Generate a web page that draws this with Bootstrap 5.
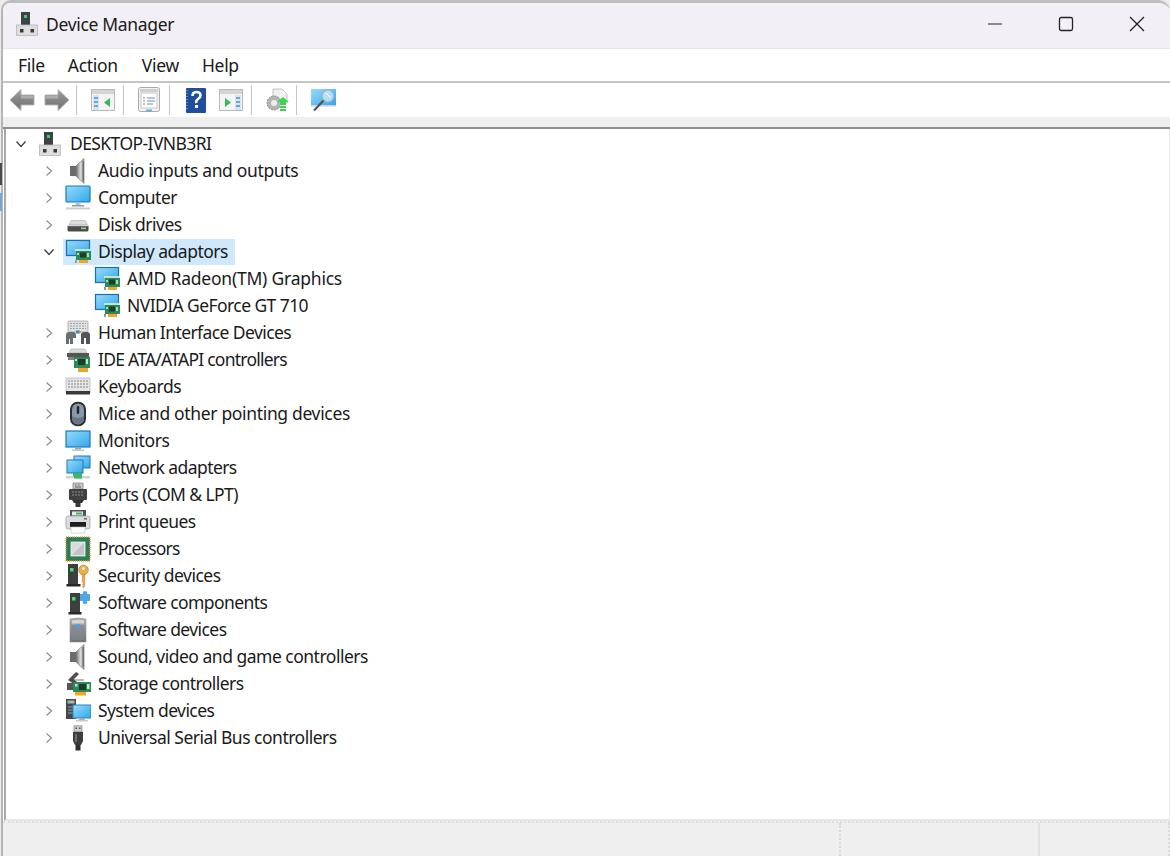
<!DOCTYPE html>
<html lang="en">
<head>
<meta charset="utf-8">
<title>Device Manager</title>
<link href="https://cdn.jsdelivr.net/npm/bootstrap@5.3.0/dist/css/bootstrap.min.css" rel="stylesheet">
<style>
html,body{height:100%;margin:0;overflow:hidden;background:#ececec}
body{font-family:"Noto Sans","Open Sans",sans-serif;color:#1a1a1a}
.win{height:856px;background:#fff;border-top:3px solid #bdbdbd;border-left:2px solid #b5b5b5;border-top-left-radius:10px;border-top-right-radius:12px;overflow:hidden;margin-left:1px;width:1169px}
.tbar{height:46px;background:#f2f0f6;border-bottom:1px dotted #dcdcdc;padding-left:12px;padding-bottom:3px;font-size:17.5px}
.tbar .ttl{margin-left:5px;letter-spacing:-.32px}
.wctl{margin-right:-2px}
.wbtn{width:71px;height:40px}
.menub{height:32px;font-size:17.5px;border-bottom:2px solid #c4c4c4;padding-left:15px;box-sizing:content-box;letter-spacing:-.3px}
.m1{margin-left:23px}.m2{margin-left:24px}.m3{margin-left:23px}
.tools{height:34px;padding-left:6px}
.tsep{width:1px;height:30px;background:#c6c6c6}
.ml9{margin-left:9px}.ml6{margin-left:6px}.ml13{margin-left:13px}.ml12{margin-left:12px}.ml8{margin-left:8px}.ml16{margin-left:16px}.ml14{margin-left:14px}
.strip{height:10px;background:#efefef;border-bottom:2px solid #8d8d8d;box-sizing:content-box}
.treebox{height:692px;border-left:2px solid #a9a9a9;margin-left:1px;padding-top:1px;font-size:17.5px;border-right:1px solid #e8e8e8;border-bottom:2px solid #e8e8e8}
.node{height:27px;letter-spacing:-.34px;white-space:nowrap}
.mid{letter-spacing:-.5px}
.nar{letter-spacing:-.58px}
.xnar{letter-spacing:-.76px}
.wid{letter-spacing:-.22px}
.chev{width:14px;height:14px;flex:none}
.ico{width:26px;height:26px;flex:none;display:block}
.lv0{padding-left:8px}.lv1{padding-left:36px}.lv2{padding-left:88px}
.lv0 .ico{margin-left:9px}.lv1 .ico{margin-left:9px}
.lab{margin-left:7px}
.sel{background:#cfe8fb;padding-right:7px;height:26px;margin-left:7px;padding-left:2px}
.lv1.opn .ico{margin-left:0}
.stat{height:35px;background:#efefef;border-top:2px dotted #dedede;border-left:0}
.sc1{width:836px}.sc2{width:199px;border-left:2px dotted #d8d8d8}.sc3{flex:1;border-left:2px solid #e2e2e2;border-right:2px dotted #d8d8d8}
.peek{left:0;width:2px}
.peek1{top:163px;height:22px;background:#4a4a4a}
.peek2{top:193px;height:18px;background:#6fa8d6}
</style>
</head>
<body>
<div class="peek peek1 position-absolute"></div>
<div class="peek peek2 position-absolute"></div>
<svg width="0" height="0" class="position-absolute">
<defs>
<linearGradient id="scr" x1="0" y1="0" x2="1" y2="1"><stop offset="0" stop-color="#9adcfb"/><stop offset="1" stop-color="#2fa6ea"/></linearGradient>
<linearGradient id="gry" x1="0" y1="0" x2="0" y2="1"><stop offset="0" stop-color="#b4b4b4"/><stop offset="1" stop-color="#6e6e6e"/></linearGradient>
<linearGradient id="spk" x1="0" y1="0" x2="1" y2="0"><stop offset="0" stop-color="#6a6a6a"/><stop offset=".55" stop-color="#dcdcdc"/><stop offset="1" stop-color="#9a9a9a"/></linearGradient>
<linearGradient id="arw" x1="0" y1="0" x2="0" y2="1"><stop offset="0" stop-color="#9b9b9b"/><stop offset="1" stop-color="#6f6f6f"/></linearGradient>

<symbol id="i-card" viewBox="0 0 26 26">
<rect x="1.500" y="1.500" width="23" height="15" fill="url(#scr)" stroke="#1d6fb0" stroke-width="1.200"/>
<rect x="11" y="12" width="15" height="9" fill="#2c8a57"/>
<rect x="10" y="10" width="15" height="2" fill="#bfe6d0"/>
<rect x="15" y="13.500" width="6" height="5" fill="#203a2c"/>
<rect x="12" y="14" width="2" height="2" fill="#a9d8bf"/><rect x="22" y="14" width="2" height="4" fill="#a9d8bf"/>
<rect x="14" y="21" width="9" height="3" fill="#f0a526"/>
<rect x="10" y="21" width="2" height="3" fill="#9a9a9a"/>
</symbol>

<symbol id="i-pc" viewBox="0 0 26 26">
<rect x="1" y="1" width="24" height="16" rx="1" fill="url(#scr)" stroke="#1979bb" stroke-width="1.200"/>
<rect x="10.500" y="17.500" width="5" height="2.500" fill="#b8c4cc"/>
<rect x="7" y="20" width="12" height="1.500" fill="#8f9aa2"/>
<rect x="1" y="22.500" width="24" height="2" fill="#c9d0d4"/>
</symbol>

<symbol id="i-mon" viewBox="0 0 26 26">
<rect x="1" y="3" width="24" height="16" fill="url(#scr)" stroke="#1979bb" stroke-width="1.200"/>
<rect x="10" y="19.500" width="6" height="2" fill="#9aa6ae"/>
<rect x="7" y="21.500" width="12" height="1.500" fill="#bcc4c9"/>
</symbol>

<symbol id="i-spk" viewBox="0 0 26 26">
<path d="M5 8h6v10H5z" fill="#6b6b6b"/>
<path d="M11 8 19 .5v25L11 18z" fill="url(#spk)" stroke="#7a7a7a" stroke-width=".7"/>
<path d="M17.500 3h1.500v20h-1.500z" fill="#6f6f6f"/>
</symbol>

<symbol id="i-disk" viewBox="0 0 26 26">
<path d="M4 12.500 6 8.500h14l2.500 4z" fill="#dcdcdc" stroke="#ababab" stroke-width=".6"/>
<rect x="2.500" y="13" width="21" height="6.500" rx="1.500" fill="#4c4c4c"/>
<rect x="2.500" y="13" width="21" height="1.200" fill="#d5d5d5"/>
<rect x="16" y="15.500" width="5" height="1.600" fill="#8bd89d"/>
</symbol>

<symbol id="i-hid" viewBox="0 0 26 26">
<rect x="3" y="1" width="20" height="11" rx="1" fill="#dfe1e3" stroke="#9b9b9b" stroke-width=".7"/>
<path d="M5 3.500h16M5 6h16M5 8.500h16" stroke="#9da3a8" stroke-dasharray="2 1"/>
<rect x="11" y="10.500" width="4" height="3" fill="#3b88d1"/><rect x="14" y="11" width="2" height="2" fill="#e09a25"/>
<path d="M1 24V15q0-3 3-3h4q3 0 3 3v3H8v6H5v-5H4v5z" fill="#6a6f74"/>
<path d="M25 24V15q0-3-3-3h-3q-3 0-3 3v9h3v-6h2v6z" fill="#50555a"/>
</symbol>

<symbol id="i-ide" viewBox="0 0 26 26">
<path d="M4 6 6 2h14l2 4z" fill="#d9d9d9" stroke="#a8a8a8" stroke-width=".6"/>
<rect x="2" y="6" width="22" height="4" fill="#555"/>
<rect x="3" y="10" width="7" height="3" fill="#858585"/>
<rect x="9" y="10" width="16" height="11" fill="#2c8a57"/>
<rect x="13" y="12" width="7" height="6" fill="#203a2c"/>
<rect x="10" y="12" width="2" height="2" fill="#bfe6d0"/><rect x="21" y="12" width="2" height="5" fill="#bfe6d0"/>
<rect x="13" y="21" width="10" height="4" fill="#f0a526"/>
</symbol>

<symbol id="i-kbd" viewBox="0 0 26 26">
<rect x="1" y="4" width="24" height="15" fill="#e4e6e8" stroke="#a8acaf" stroke-width=".7"/>
<path d="M3 7h20M3 10h20M3 13h20" stroke="#a1a7ac" stroke-width="1.500" stroke-dasharray="2 1"/>
<rect x="1" y="17" width="24" height="3.500" fill="#3b3b3b"/>
</symbol>

<symbol id="i-mouse" viewBox="0 0 26 26">
<rect x="5" y="0.800" width="16" height="24.400" rx="7.500" fill="#2c2f32"/>
<rect x="7" y="2.500" width="12" height="21" rx="6" fill="#8898ac"/>
<rect x="11.800" y="5" width="2.400" height="8" rx="1.200" fill="#22262a"/>
<path d="M7 15q6 4 12 0v3q-1 5-6 5t-6-5z" fill="#6a7686"/>
</symbol>

<symbol id="i-net" viewBox="0 0 26 26">
<rect x="9" y="1" width="16" height="12" fill="url(#scr)" stroke="#1979bb"/>
<rect x="2" y="5" width="16" height="13" fill="url(#scr)" stroke="#1979bb"/>
<rect x="8" y="18" width="9" height="5" fill="#3fb36a"/>
<rect x="1" y="21" width="24" height="2.500" fill="#cfd3d6"/>
<rect x="9" y="21" width="8" height="2.500" fill="#3fb36a"/>
</symbol>

<symbol id="i-port" viewBox="0 0 26 26">
<path d="M8 1h10v6H8z" fill="#c9c9c9" stroke="#777" stroke-width=".7"/>
<path d="M10 3h1.500M13 3h1.500M10 5h6" stroke="#666"/>
<rect x="4" y="7" width="18" height="11" rx="1" fill="#3f4143"/>
<path d="M7 10h12M7 13h12" stroke="#8c8f92" stroke-dasharray="2 1" stroke-width="1.200"/>
<path d="M7 18h12l-2 3h-8z" fill="#333"/>
<rect x="10.500" y="21" width="5" height="4" fill="#3a3a3a"/>
</symbol>

<symbol id="i-print" viewBox="0 0 26 26">
<path d="M5 7V1h16v6z" fill="#4d5256"/>
<rect x="7" y="2.500" width="11" height="4" fill="#e8e8e8"/><rect x="11" y="3.500" width="6" height="2" fill="#43b36b"/>
<rect x="1" y="7" width="24" height="13" rx="2" fill="#dadcdd" stroke="#9b9b9b" stroke-width=".7"/>
<rect x="5" y="13" width="16" height="5" fill="#1f1f1f"/>
<rect x="6" y="18" width="14" height="6" fill="#fff" stroke="#bbb" stroke-width=".6"/>
<rect x="19" y="9" width="3" height="1.500" fill="#6b6b6b"/>
</symbol>

<symbol id="i-cpu" viewBox="0 0 26 26">
<rect x="1" y="1" width="24" height="24" fill="#2f7a57"/>
<rect x="1" y="1" width="24" height="24" fill="none" stroke="#d9a53a" stroke-width="1.400" stroke-dasharray="1 1"/>
<rect x="6" y="6" width="14" height="14" fill="#d9dbdc" stroke="#f3f3f3" stroke-width=".8"/>
<path d="M7 19 19 7v12z" fill="#c2c5c7"/>
</symbol>

<symbol id="i-sec" viewBox="0 0 26 26">
<path d="M3 1h10v20H3z" fill="#3c3e40"/>
<rect x="1.500" y="21" width="14" height="2.500" fill="#282828"/>
<rect x="5" y="5" width="3.500" height="3.500" fill="#44e05c"/>
<circle cx="18.500" cy="7" r="4.800" fill="#eab04f" stroke="#b17c26" stroke-width=".7"/>
<circle cx="18.500" cy="5.500" r="1.300" fill="#fff"/>
<path d="M17.300 11h2.400v12l-1.200 2-1.200-1.500 1-1-1-1 1-1-1-1z" fill="#e5a63f" stroke="#b17c26" stroke-width=".4"/>
</symbol>

<symbol id="i-soft" viewBox="0 0 26 26">
<path d="M5 3h10v19H5z" fill="#3c3e40"/>
<rect x="3.500" y="22" width="13" height="2.500" fill="#282828"/>
<rect x="7" y="7" width="3.500" height="3.500" fill="#44e05c"/>
<path d="M15 4h3q-1-3 2-3t2 3h3v7h-3q1 3-2 3t-2-3h-3z" fill="#53a6e4"/>
</symbol>

<symbol id="i-dev" viewBox="0 0 26 26">
<path d="M5 2q8-2 16 0v23H5z" fill="url(#gry)" stroke="#8a9096" stroke-width=".6"/>
<path d="M6.500 8h13v15h-13z" fill="#7f8890" opacity=".7"/>
<path d="M7 3.500q6-1 12 0v3H7z" fill="#d5d8db"/>
<circle cx="13" cy="9" r="2.200" fill="#4da3e6"/>
</symbol>

<symbol id="i-stor" viewBox="0 0 26 26">
<path d="M3 9 11 1l3 2-5 5 4 4-3 2z" fill="#4e4e4e"/>
<path d="M9 8h10v2H11z" fill="#bdbdbd"/>
<rect x="2" y="12" width="8" height="7" fill="#555"/>
<rect x="8" y="11" width="18" height="10" fill="#2c8a57"/>
<rect x="14" y="13" width="7" height="6" fill="#203a2c"/>
<rect x="10" y="13" width="2.500" height="2.500" fill="#bfe6d0"/><rect x="22" y="13" width="2.500" height="5" fill="#bfe6d0"/>
<rect x="10" y="21" width="11" height="3.500" fill="#f0a526"/>
</symbol>

<symbol id="i-sys" viewBox="0 0 26 26">
<rect x="1" y="1" width="10" height="20" fill="#43474a"/>
<rect x="2.500" y="2.500" width="7" height="3" fill="#b2b6b9"/>
<rect x="3" y="3" width="2" height="1.500" fill="#4ae264"/>
<path d="M3 9h5M3 12h5M3 15h5" stroke="#9a9ea1"/>
<rect x="8" y="7" width="18" height="13" fill="url(#scr)" stroke="#2d83c0"/>
<rect x="14" y="20" width="6" height="2" fill="#a6afb5"/><rect x="11" y="22" width="12" height="1.500" fill="#c5cbcf"/>
</symbol>

<symbol id="i-usb" viewBox="0 0 26 26">
<rect x="9" y="0.800" width="8" height="6" fill="#cdcdcd" stroke="#858585" stroke-width=".7"/>
<rect x="10.500" y="2.500" width="1.500" height="1.500" fill="#555"/><rect x="14" y="2.500" width="1.500" height="1.500" fill="#555"/>
<path d="M8 7h10v9l-2 4h-6l-2-4z" fill="#3b3d3f"/>
<rect x="10" y="9" width="2" height="8" fill="#6c6f72"/>
<rect x="10.500" y="20" width="5" height="5.500" fill="#2e2e2e"/>
</symbol>

<symbol id="i-root" viewBox="0 0 24 26">
<rect x="6" y="1" width="9" height="14" fill="#3c4245"/>
<rect x="9" y="4" width="3" height="3" fill="#31d26c"/>
<path d="M3 14.500h18v9H3z" fill="#c9c9c9"/><path d="M6 14.500h12v2H6z" fill="#e8e8e8"/>
<rect x="1.500" y="14" width="21" height="10.500" fill="#dedede" stroke="#b6b6b6" stroke-width=".8"/>
<rect x="5" y="18" width="3.500" height="3.500" fill="#3a3a3a"/><rect x="15.500" y="18" width="3.500" height="3.500" fill="#3a3a3a"/>
</symbol>

<symbol id="chev-r" viewBox="0 0 14 14"><path d="M4.500 2.500 9.500 7l-5 4.500" fill="none" stroke="#8c8c8c" stroke-width="1.200"/></symbol>
<symbol id="chev-d" viewBox="0 0 14 14"><path d="M2.500 4.500 7 9.500l4.500-5" fill="none" stroke="#3a3a3a" stroke-width="1.200"/></symbol>
</defs>
</svg>

<div class="win d-flex flex-column">
  <div class="tbar d-flex align-items-center">
    <svg class="ico" width="24" height="26"><use href="#i-root" width="24" height="26"/></svg>
    <span class="ttl">Device Manager</span>
    <div class="wctl d-flex ms-auto">
      <div class="wbtn d-flex align-items-center justify-content-center"><svg width="16" height="16" viewBox="0 0 16 16"><path d="M1 8h14" stroke="#222" stroke-width="1.200"/></svg></div>
      <div class="wbtn d-flex align-items-center justify-content-center"><svg width="16" height="16" viewBox="0 0 16 16"><rect x="1.500" y="1.500" width="13" height="13" rx="1.800" fill="none" stroke="#222" stroke-width="1.300"/></svg></div>
      <div class="wbtn d-flex align-items-center justify-content-center"><svg width="16" height="16" viewBox="0 0 16 16"><path d="M1 1l14 14M15 1 1 15" stroke="#222" stroke-width="1.300"/></svg></div>
    </div>
  </div>
  <div class="menub d-flex align-items-center">
    <span>File</span><span class="m1">Action</span><span class="m2">View</span><span class="m3">Help</span>
  </div>
  <div class="tools d-flex align-items-center">
    <svg width="26" height="24" viewBox="0 0 26 24"><path d="M1 12 12 1.500v5.500h13v10H12v5.500z" fill="url(#arw)" stroke="#b5b5b5"/><path d="M12 8h12v2.500H12z" fill="#adadad"/></svg>
    <svg class="ml9" width="26" height="24" viewBox="0 0 26 24"><path d="M25 12 14 1.500v5.500H1v10h13v5.500z" fill="url(#arw)" stroke="#b5b5b5"/><path d="M2 8h12v2.500H2z" fill="#adadad"/></svg>
    <div class="tsep ml6"></div>
    <svg class="ml14" width="24" height="22" viewBox="0 0 24 22"><rect x=".5" y=".5" width="23" height="21" fill="#f4f4f4" stroke="#b9b9b9"/><rect x="1" y="1" width="22" height="4" fill="#d2d4d6"/><rect x="2" y="6" width="6" height="15" fill="#d6e4ee"/><path d="M3 9h4M3 13h4M3 17h4" stroke="#4f93c8" stroke-width="1.500"/><path d="M19 9v9l-6-4.500z" fill="#3cb560"/></svg>
    <div class="tsep ml8"></div>
    <svg class="ml14" width="22" height="26" viewBox="0 0 22 26"><rect x=".5" y=".5" width="21" height="24" rx="2" fill="#f2f2f2" stroke="#a9a9a9"/><rect x="2" y="2" width="18" height="3" fill="#cfcfcf"/><rect x="3" y="6" width="16" height="15" fill="#fff" stroke="#c8c8c8"/><path d="M5 11h2M9 11h8M5 14h2M9 14h8M5 17h2M9 17h6" stroke="#6c8ba5"/><rect x="8" y="22.500" width="6" height="2" fill="#5fb0e6"/></svg>
    <div class="tsep ml9"></div>
    <svg class="ml16" width="20" height="25" viewBox="0 0 20 25"><rect width="20" height="25" rx="1" fill="#1f4e9b"/><path d="M1 2v21" stroke="#5f8ad0" stroke-dasharray="1 2" stroke-width="2"/><path d="M6.500 8q0-4 4-4t4 3.500q0 2-2.500 3.500T10.500 15" fill="none" stroke="#fff" stroke-width="2.600"/><rect x="9" y="17" width="3" height="3" fill="#fff"/></svg>
    <svg class="ml13" width="24" height="22" viewBox="0 0 24 22"><rect x=".5" y=".5" width="23" height="21" fill="#f4f4f4" stroke="#b9b9b9"/><rect x="1" y="1" width="22" height="4" fill="#d2d4d6"/><rect x="16" y="6" width="6" height="15" fill="#d6e4ee"/><path d="M17 9h4M17 13h4M17 17h4" stroke="#4f93c8" stroke-width="1.500"/><path d="M6 9v9l6-4.500z" fill="#3cb560"/></svg>
    <div class="tsep ml8"></div>
    <svg class="ml13" width="25" height="25" viewBox="0 0 25 25"><path d="M8 1h9l5 5v9H8z" fill="#f1f1f1" stroke="#c4c4c4"/><circle cx="9" cy="15" r="7" fill="#b5b5b5" stroke="#8a8a8a" stroke-dasharray="2 1"/><circle cx="9" cy="15" r="3" fill="#eee"/><path d="M18 9l6 5h-3v3h-6v-3h-3z" fill="#3fd44f"/><path d="M15 18h6v2h-6zM15 21h6v2h-6z" fill="#3fd44f"/></svg>
    <div class="tsep ml6"></div>
    <svg class="ml14" width="25" height="24" viewBox="0 0 25 24"><rect x="0" y="1" width="25" height="16" fill="url(#scr)"/><rect x="0" y="17" width="25" height="1.500" fill="#c9d0d4"/><circle cx="17" cy="8" r="6" fill="#cfe9f7" fill-opacity=".75" stroke="#9bb3c1" stroke-width="1.100"/><path d="M12.500 12.500 3 22.500" stroke="#4f4f4f" stroke-width="2"/><path d="M15 5l5 5" stroke="#fff"/></svg>
  </div>
  <div class="strip"></div>
  <div class="treebox">
    <div class="node lv0 d-flex align-items-center"><svg class="chev"><use href="#chev-d" width="14" height="14"/></svg><svg class="ico" width="24" height="26"><use href="#i-root" width="26" height="26"/></svg><span class="lab nar">DESKTOP-IVNB3RI</span></div>
    <div class="node lv1 d-flex align-items-center"><svg class="chev"><use href="#chev-r" width="14" height="14"/></svg><svg class="ico"><use href="#i-spk" width="26" height="26"/></svg><span class="lab">Audio inputs and outputs</span></div>
    <div class="node lv1 d-flex align-items-center"><svg class="chev"><use href="#chev-r" width="14" height="14"/></svg><svg class="ico"><use href="#i-pc" width="26" height="26"/></svg><span class="lab mid">Computer</span></div>
    <div class="node lv1 d-flex align-items-center"><svg class="chev"><use href="#chev-r" width="14" height="14"/></svg><svg class="ico"><use href="#i-disk" width="26" height="26"/></svg><span class="lab mid">Disk drives</span></div>
    <div class="node lv1 opn d-flex align-items-center"><svg class="chev"><use href="#chev-d" width="14" height="14"/></svg><div class="sel d-flex align-items-center"><svg class="ico"><use href="#i-card" width="26" height="26"/></svg><span class="lab mid">Display adaptors</span></div></div>
    <div class="node lv2 d-flex align-items-center"><svg class="ico"><use href="#i-card" width="26" height="26"/></svg><span class="lab wid">AMD Radeon(TM) Graphics</span></div>
    <div class="node lv2 d-flex align-items-center"><svg class="ico"><use href="#i-card" width="26" height="26"/></svg><span class="lab nar">NVIDIA GeForce GT 710</span></div>
    <div class="node lv1 d-flex align-items-center"><svg class="chev"><use href="#chev-r" width="14" height="14"/></svg><svg class="ico"><use href="#i-hid" width="26" height="26"/></svg><span class="lab nar">Human Interface Devices</span></div>
    <div class="node lv1 d-flex align-items-center"><svg class="chev"><use href="#chev-r" width="14" height="14"/></svg><svg class="ico"><use href="#i-ide" width="26" height="26"/></svg><span class="lab xnar">IDE ATA/ATAPI controllers</span></div>
    <div class="node lv1 d-flex align-items-center"><svg class="chev"><use href="#chev-r" width="14" height="14"/></svg><svg class="ico"><use href="#i-kbd" width="26" height="26"/></svg><span class="lab">Keyboards</span></div>
    <div class="node lv1 d-flex align-items-center"><svg class="chev"><use href="#chev-r" width="14" height="14"/></svg><svg class="ico"><use href="#i-mouse" width="26" height="26"/></svg><span class="lab">Mice and other pointing devices</span></div>
    <div class="node lv1 d-flex align-items-center"><svg class="chev"><use href="#chev-r" width="14" height="14"/></svg><svg class="ico"><use href="#i-mon" width="26" height="26"/></svg><span class="lab">Monitors</span></div>
    <div class="node lv1 d-flex align-items-center"><svg class="chev"><use href="#chev-r" width="14" height="14"/></svg><svg class="ico"><use href="#i-net" width="26" height="26"/></svg><span class="lab nar">Network adapters</span></div>
    <div class="node lv1 d-flex align-items-center"><svg class="chev"><use href="#chev-r" width="14" height="14"/></svg><svg class="ico"><use href="#i-port" width="26" height="26"/></svg><span class="lab nar">Ports (COM &amp; LPT)</span></div>
    <div class="node lv1 d-flex align-items-center"><svg class="chev"><use href="#chev-r" width="14" height="14"/></svg><svg class="ico"><use href="#i-print" width="26" height="26"/></svg><span class="lab nar">Print queues</span></div>
    <div class="node lv1 d-flex align-items-center"><svg class="chev"><use href="#chev-r" width="14" height="14"/></svg><svg class="ico"><use href="#i-cpu" width="26" height="26"/></svg><span class="lab xnar">Processors</span></div>
    <div class="node lv1 d-flex align-items-center"><svg class="chev"><use href="#chev-r" width="14" height="14"/></svg><svg class="ico"><use href="#i-sec" width="26" height="26"/></svg><span class="lab mid">Security devices</span></div>
    <div class="node lv1 d-flex align-items-center"><svg class="chev"><use href="#chev-r" width="14" height="14"/></svg><svg class="ico"><use href="#i-soft" width="26" height="26"/></svg><span class="lab nar">Software components</span></div>
    <div class="node lv1 d-flex align-items-center"><svg class="chev"><use href="#chev-r" width="14" height="14"/></svg><svg class="ico"><use href="#i-dev" width="26" height="26"/></svg><span class="lab nar">Software devices</span></div>
    <div class="node lv1 d-flex align-items-center"><svg class="chev"><use href="#chev-r" width="14" height="14"/></svg><svg class="ico"><use href="#i-spk" width="26" height="26"/></svg><span class="lab mid">Sound, video and game controllers</span></div>
    <div class="node lv1 d-flex align-items-center"><svg class="chev"><use href="#chev-r" width="14" height="14"/></svg><svg class="ico"><use href="#i-stor" width="26" height="26"/></svg><span class="lab nar">Storage controllers</span></div>
    <div class="node lv1 d-flex align-items-center"><svg class="chev"><use href="#chev-r" width="14" height="14"/></svg><svg class="ico"><use href="#i-sys" width="26" height="26"/></svg><span class="lab nar">System devices</span></div>
    <div class="node lv1 d-flex align-items-center"><svg class="chev"><use href="#chev-r" width="14" height="14"/></svg><svg class="ico"><use href="#i-usb" width="26" height="26"/></svg><span class="lab mid">Universal Serial Bus controllers</span></div>
  </div>
  <div class="stat d-flex">
    <div class="sc1"></div><div class="sc2"></div><div class="sc3"></div>
  </div>
</div>
<script src="https://cdn.jsdelivr.net/npm/bootstrap@5.3.0/dist/js/bootstrap.bundle.min.js"></script>
</body>
</html>
